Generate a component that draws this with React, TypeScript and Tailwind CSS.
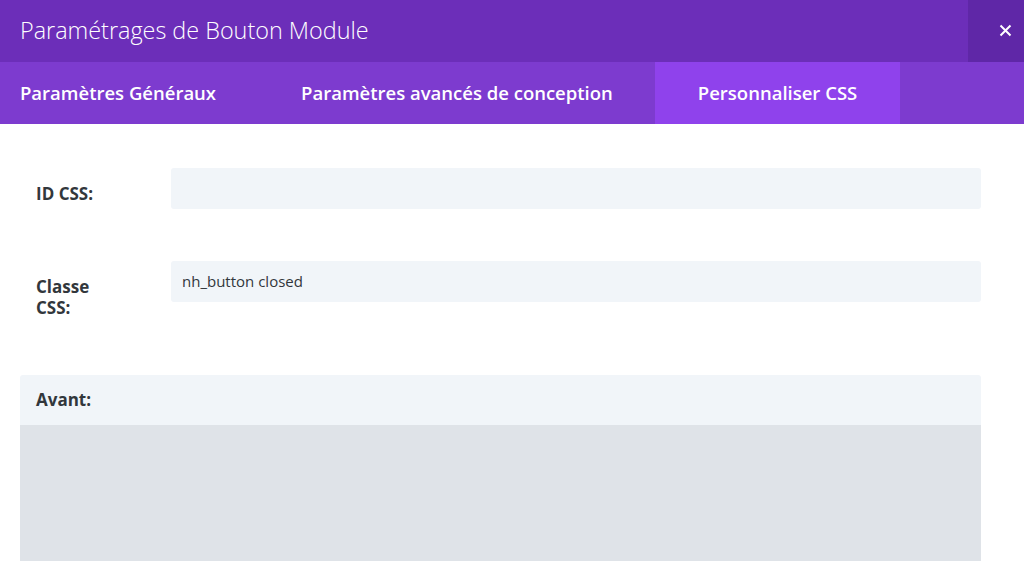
import * as React from "react"

const tabs = [
  { name: "Paramètres Généraux", className: "pl-[20px] pr-[43px]" },
  { name: "Paramètres avancés de conception", className: "px-[42px]" },
  { name: "Personnaliser CSS", className: "px-[43px] bg-[#8f42ec]" },
]

function Field({ label, value }: { label: React.ReactNode; value?: string }) {
  return (
    <div className="flex items-start">
      <div className="w-[151px] shrink-0 pl-[16px] pt-[15px] pr-4 text-[17px] font-bold leading-[21px] text-[#32373c]">
        {label}
      </div>
      <div className="flex h-[41px] w-[810px] items-center rounded-[3px] bg-[#f1f5f9] px-[11px] text-[15px] text-[#32373c]">
        {value}
      </div>
    </div>
  )
}

export default function App() {
  return (
    <div className="h-[561px] w-[1024px] overflow-hidden bg-white font-['Open_Sans',sans-serif]">
      {/* header */}
      <div className="flex h-[62px] bg-[#6c2eb9]">
        <h1 className="flex flex-1 items-center pl-[20px] text-[23.4px] font-light text-white">
          Paramétrages de Bouton Module
        </h1>
        <button className="flex w-[56px] items-center justify-center bg-[#5f27a7] pl-[18px] pb-[2px] text-white">
          <svg width="13" height="13" viewBox="0 0 13 13" fill="none" stroke="currentColor" strokeWidth="2">
            <path d="M1.5 1.5l10 10M11.5 1.5l-10 10" />
          </svg>
        </button>
      </div>

      {/* tabs */}
      <div className="flex h-[62px] bg-[#7d3bcf]">
        {tabs.map((tab) => (
          <div
            key={tab.name}
            className={`flex items-center text-[18.5px] font-semibold text-white ${tab.className}`}
          >
            {tab.name}
          </div>
        ))}
      </div>

      {/* content */}
      <div className="flex flex-col pl-[20px] pt-[44px]">
        <Field label="ID CSS:" />
        <div className="h-[52px]" />
        <Field label={<>Classe<br />CSS:</>} value="nh_button closed" />
        <div className="mt-[57px] w-[961px] overflow-hidden rounded-t-[3px]">
          <div className="flex h-[50px] items-center bg-[#f1f5f9] pl-[16px] text-[17px] font-bold text-[#32373c]">
            Avant:
          </div>
          <div className="h-[200px] bg-[#dfe3e8]" />
        </div>
      </div>
    </div>
  )
}
